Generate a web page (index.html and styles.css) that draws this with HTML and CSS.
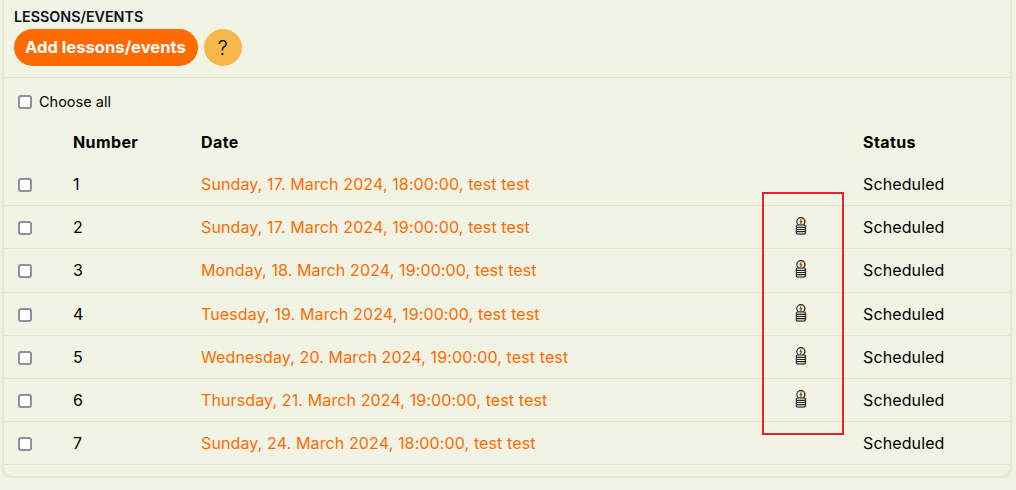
FILE: index.html
```html
<!DOCTYPE html>
<html lang="en">
  <head>
    <meta charset="UTF-8">
    <title>Lessons/Events</title>
    <link rel="stylesheet" href="styles.css">
  </head>
  <body>
    <svg class="icon-defs" width="0" height="0">
      <symbol id="coins" viewBox="0 0 12 18">
        <circle cx="6.5" cy="4.6" r="4" fill="none" stroke="#d98a1e" stroke-width="1"/>
        <circle cx="5.8" cy="4.6" r="4" fill="#f5efd6" stroke="#10233a" stroke-width="1.1"/>
        <path d="M6.2 2.2 5.2 4.6h1.4L5.6 7" fill="none" stroke="#8a4b10" stroke-width="1.1"/>
        <rect x="1.9" y="8" width="9" height="9" rx="1.2" fill="none" stroke="#d98a1e" stroke-width="1"/>
        <rect x="1.3" y="8" width="9" height="9" rx="1.2" fill="#f7f3dc" stroke="#10233a" stroke-width="1.1"/>
        <path d="M2 10.3h8M2 12.5h8M2 14.7h8" stroke="#15202c" stroke-width="1.2"/>
      </symbol>
    </svg>
    <div class="card">
      <div class="card-head">
        <h2>LESSONS/EVENTS</h2>
        <div class="actions">
          <a class="btn-add" href="#">Add lessons/events</a>
          <a class="btn-help" href="#">?</a>
        </div>
      </div>
      <label class="choose-all"><input type="checkbox"> Choose all</label>
      <table>
        <thead>
          <tr>
            <th class="col-check"></th>
            <th class="col-num">Number</th>
            <th class="col-date">Date</th>
            <th class="col-icon"></th>
            <th>Status</th>
          </tr>
        </thead>
        <tbody>
          <tr>
            <td><input type="checkbox"></td>
            <td>1</td>
            <td><a href="#">Sunday, 17. March 2024, 18:00:00, test test</a></td>
            <td></td>
            <td>Scheduled</td>
          </tr>
          <tr>
            <td><input type="checkbox"></td>
            <td>2</td>
            <td><a href="#">Sunday, 17. March 2024, 19:00:00, test test</a></td>
            <td class="coin"><svg width="12" height="18"><use href="#coins"/></svg></td>
            <td>Scheduled</td>
          </tr>
          <tr>
            <td><input type="checkbox"></td>
            <td>3</td>
            <td><a href="#">Monday, 18. March 2024, 19:00:00, test test</a></td>
            <td class="coin"><svg width="12" height="18"><use href="#coins"/></svg></td>
            <td>Scheduled</td>
          </tr>
          <tr>
            <td><input type="checkbox"></td>
            <td>4</td>
            <td><a href="#">Tuesday, 19. March 2024, 19:00:00, test test</a></td>
            <td class="coin"><svg width="12" height="18"><use href="#coins"/></svg></td>
            <td>Scheduled</td>
          </tr>
          <tr>
            <td><input type="checkbox"></td>
            <td>5</td>
            <td><a href="#">Wednesday, 20. March 2024, 19:00:00, test test</a></td>
            <td class="coin"><svg width="12" height="18"><use href="#coins"/></svg></td>
            <td>Scheduled</td>
          </tr>
          <tr>
            <td><input type="checkbox"></td>
            <td>6</td>
            <td><a href="#">Thursday, 21. March 2024, 19:00:00, test test</a></td>
            <td class="coin"><svg width="12" height="18"><use href="#coins"/></svg></td>
            <td>Scheduled</td>
          </tr>
          <tr>
            <td><input type="checkbox"></td>
            <td>7</td>
            <td><a href="#">Sunday, 24. March 2024, 18:00:00, test test</a></td>
            <td></td>
            <td>Scheduled</td>
          </tr>
        </tbody>
      </table>
    </div>
    <div class="highlight"></div>
  </body>
</html>
```

FILE: styles.css
```css
body {
  font-family: Inter, "Liberation Sans", sans-serif;
  margin: 0;
  padding: 0;
  background-color: #f1f3e4;
  color: #000;
  font-size: 16px;
  letter-spacing: 0.12px;
  overflow: hidden;
}

.icon-defs {
  position: absolute;
}

.card {
  margin: 0 4px 0 2px;
  border: 2px solid #e4e8d3;
  border-top: none;
  border-radius: 0 0 11px 11px;
  box-shadow: 0 2px 2px #e9ecd9;
  padding-bottom: 11px;
}

.card-head {
  padding: 9px 10px 11px;
  border-bottom: 1px solid #e1e5cf;
}

h2 {
  margin: 0;
  font-size: 14.3px;
  line-height: 16px;
  font-weight: 600;
  letter-spacing: 0;
  color: #0d1220;
}

.actions {
  display: flex;
  align-items: center;
  gap: 6px;
  margin-top: 4px;
}

.btn-add {
  background-color: #ff6b00;
  color: white;
  font-weight: 700;
  font-size: 16.6px;
  letter-spacing: 0;
  line-height: 37px;
  padding: 0 12px 0 11px;
  border-radius: 19px;
  text-decoration: none;
}

.btn-help {
  width: 38px;
  height: 37px;
  line-height: 38px;
  border-radius: 50%;
  background-color: #f6b84a;
  color: #000;
  text-align: center;
  font-size: 20px;
  font-weight: 300;
  text-decoration: none;
}

.choose-all {
  display: flex;
  align-items: center;
  gap: 7px;
  padding: 15px 14px 9px;
  font-size: 14.5px;
  letter-spacing: 0;
  line-height: 18px;
}

input[type="checkbox"] {
  width: 14px;
  height: 14px;
  margin: 0;
  appearance: none;
  background-color: white;
  border: 2px solid #8f8f9d;
  border-radius: 3px;
  display: block;
}

td input[type="checkbox"] {
  margin-top: 2px;
}

table {
  width: 100%;
  border-collapse: collapse;
  table-layout: fixed;
}

th {
  text-align: left;
  font-weight: 700;
  height: 43px;
  padding: 0;
  letter-spacing: 0.4px;
}

td {
  height: 42.2px;
  padding: 0;
  border-bottom: 1px solid #e1e5cf;
}

td:first-child {
  padding-left: 14px;
}

.col-check {
  width: 69px;
}

.col-num {
  width: 128px;
}

.col-date {
  width: 591px;
}

.col-icon {
  width: 71px;
}

td a {
  color: #ff6b00;
  text-decoration: none;
}

.coin svg {
  display: block;
  margin-left: 3px;
  margin-top: -2px;
}

.highlight {
  position: absolute;
  left: 762px;
  top: 192px;
  width: 78px;
  height: 239px;
  border: 2px solid #e8202a;
}
```
